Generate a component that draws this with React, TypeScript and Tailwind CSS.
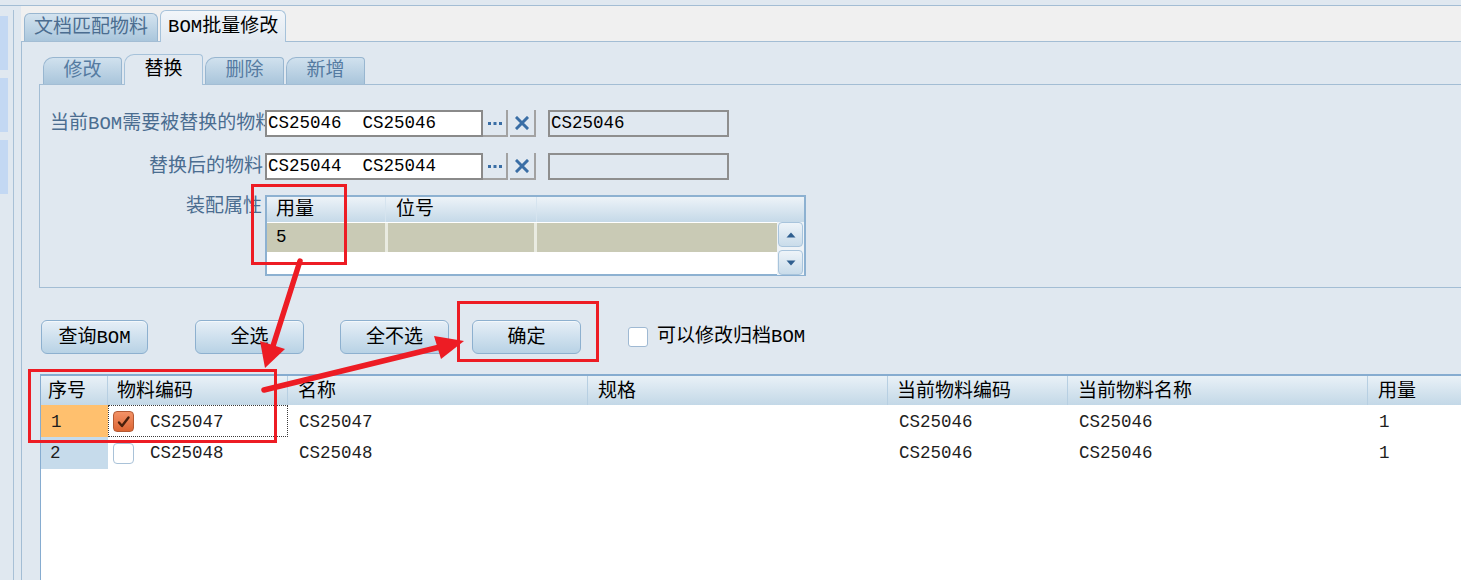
import React from "react";

const code = "text-[17.5px]";

function OuterTab({ label, active }: { label: string; active?: boolean }) {
  if (active) {
    return (
      <div className="relative z-10 mb-[-1px] h-[32px] w-[126px] rounded-t-[6px] border border-b-0 border-[#a6c2da] bg-linear-to-b from-[#f2f6fa] to-[#e0e8f0] pl-[7px] pt-[2px] flex items-center text-black whitespace-nowrap">
        {label}
      </div>
    );
  }
  return (
    <div className="h-[28px] w-[134px] rounded-t-[6px] border border-b-0 border-[#98b6d0] bg-linear-to-b from-[#d3e3ef] to-[#aac6dc] pl-[9px] pt-[2px] flex items-center text-[#4b6d90] whitespace-nowrap">
      {label}
    </div>
  );
}

function InnerTab({ label, active }: { label: string; active?: boolean }) {
  if (active) {
    return (
      <div className="relative z-10 mb-[-1px] h-[31px] w-[79px] rounded-tl-[10px] rounded-tr-[4px] border border-b-0 border-[#a6c2da] bg-[#e0e8f0] flex items-center justify-center text-black">
        {label}
      </div>
    );
  }
  return (
    <div className="h-[27px] w-[79px] rounded-tl-[10px] rounded-tr-[4px] border border-b-0 border-[#98b6d0] bg-linear-to-b from-[#d0e1ee] to-[#a9c5db] flex items-center justify-center text-[#557ba1]">
      {label}
    </div>
  );
}

function DotsBtn() {
  return (
    <div className="h-[27px] w-[25px] border-r-2 border-b-2 border-[#a2a2a2] bg-[#e0e8f0] flex items-center justify-center">
      <svg width="16" height="4" viewBox="0 0 16 4">
        <rect x="1" y="1" width="3" height="3" fill="#3a6ea5" />
        <rect x="6.5" y="1" width="3" height="3" fill="#3a6ea5" />
        <rect x="12" y="1" width="3" height="3" fill="#3a6ea5" />
      </svg>
    </div>
  );
}

function ClearBtn() {
  return (
    <div className="ml-[2px] h-[27px] w-[26px] border-r-2 border-b-2 border-[#a2a2a2] bg-[#e0e8f0] flex items-center justify-center">
      <svg width="14" height="14" viewBox="0 0 14 14">
        <path d="M2 2 L12 12 M12 2 L2 12" stroke="#3a6ea5" strokeWidth="3" strokeLinecap="square" />
      </svg>
    </div>
  );
}

function Btn({ label, w, ml }: { label: string; w: string; ml: string }) {
  return (
    <div
      className={`${w} ${ml} h-[34px] pt-[2px] rounded-[6px] border border-[#8db0cf] bg-linear-to-b from-[#e6eff7] to-[#b8d2e5] flex items-center justify-center text-black shadow-[inset_0_1px_0_#f4f8fb]`}
    >
      {label}
    </div>
  );
}

function ScrollBtn({ up }: { up?: boolean }) {
  return (
    <div className="h-[25px] w-[25px] rounded-[4px] border border-[#a8c4dc] bg-linear-to-b from-[#eef4f9] to-[#c9dcea] flex items-center justify-center">
      <svg width="10" height="6" viewBox="0 0 10 6">
        {up ? <polygon points="5,0.5 9.5,5.5 0.5,5.5" fill="#2f5f8f" /> : <polygon points="0.5,0.5 9.5,0.5 5,5.5" fill="#2f5f8f" />}
      </svg>
    </div>
  );
}

function CheckOn() {
  return (
    <div className="h-[21px] w-[21px] rounded-[4px] border border-[#b35a34] bg-linear-to-b from-[#f39266] to-[#dc6432] flex items-center justify-center">
      <svg width="15" height="15" viewBox="0 0 15 15">
        <path d="M3 8.5 L6 12 L12.5 3.5" fill="none" stroke="#4a200c" strokeWidth="2.4" strokeLinecap="round" strokeLinejoin="round" />
      </svg>
    </div>
  );
}

function CheckOff() {
  return <div className="h-[21px] w-[21px] rounded-[4px] border border-[#a9c2d8] bg-white" />;
}

export default function App() {
  return (
    <div className="relative w-[1461px] h-[580px] overflow-hidden bg-[#e0e8f0] text-[19px] leading-none text-black font-['Liberation_Mono','Noto_Sans_CJK_SC',monospace] flex flex-col">
      <div className="h-[6px] shrink-0 border-b border-[#a3bdd4]" />
      <div className="flex flex-1 min-h-0">
        {/* sidebar */}
        <div className="w-[21px] shrink-0 flex">
          <div className="w-[8px] flex flex-col gap-[8px] pt-[10px]">
            <div className="h-[54px] bg-[#c3d8f3]" />
            <div className="h-[54px] bg-[#c3d8f3]" />
            <div className="h-[54px] bg-[#c3d8f3]" />
          </div>
          <div className="w-[5px]" />
          <div className="w-[8px] mt-[4px] border-l border-[#a8c0d6]" />
        </div>
        {/* main */}
        <div className="flex-1 min-w-0 flex flex-col">
          <div className="h-[35px] shrink-0 bg-[#f0f0f0] flex items-end pl-[3px] gap-[2px]">
            <OuterTab label="文档匹配物料" />
            <OuterTab label="BOM批量修改" active />
          </div>
          <div className="flex-1 min-h-0 border-l border-t border-[#a3bdd4] pl-[17px] flex flex-col">
            {/* inner tabs */}
            <div className="mt-[12px] h-[30px] shrink-0 flex items-end gap-[2px] pl-[4px]">
              <InnerTab label="修改" />
              <InnerTab label="替换" active />
              <InnerTab label="删除" />
              <InnerTab label="新增" />
            </div>
            {/* inner panel */}
            <div className="h-[204px] shrink-0 border-l border-t border-b border-[#a3bdd4] pt-[25px]">
              {/* row 1 */}
              <div className="flex items-center h-[27px]">
                <div className="w-[225px] pl-[10px] pt-[1px] whitespace-nowrap text-[#4b6d90]">
                  <span className="relative">当前BOM需要被替换的物料</span>
                </div>
                <div className={`relative z-10 w-[218px] h-[27px] border-2 border-[#8a8a8a] bg-white pl-[1px] flex items-center whitespace-pre ${code}`}>
                  CS25046  CS25046
                </div>
                <DotsBtn />
                <ClearBtn />
                <div className={`ml-[12px] w-[181px] h-[27px] border-2 border-[#8e8e8e] bg-[#e0e8f0] pl-[1px] flex items-center ${code}`}>
                  CS25046
                </div>
              </div>
              {/* row 2 */}
              <div className="mt-[16px] flex items-center h-[27px]">
                <div className="w-[225px] pr-[2px] pt-[1px] flex justify-end whitespace-nowrap text-[#4b6d90]">替换后的物料</div>
                <div className={`w-[218px] h-[27px] border-2 border-[#8a8a8a] bg-white pl-[1px] flex items-center whitespace-pre ${code}`}>
                  CS25044  CS25044
                </div>
                <DotsBtn />
                <ClearBtn />
                <div className="ml-[12px] w-[181px] h-[27px] border-2 border-[#8e8e8e] bg-[#e0e8f0]" />
              </div>
              {/* row 3 */}
              <div className="mt-[15px] flex items-start">
                <div className="w-[225px] pr-[3px] pt-[3px] flex justify-end whitespace-nowrap text-[#4b6d90]">装配属性</div>
                <div className="w-[541px] h-[81px] border-2 border-[#8db1d1] bg-white flex flex-col">
                  <div className="h-[25px] shrink-0 flex bg-linear-to-b from-[#edf3f8] to-[#c5d9e8]">
                    <div className="w-[119px] border-r border-[#d6e4ef] pl-[9px] pt-[2px] flex items-center">用量</div>
                    <div className="w-[151px] border-r border-[#d6e4ef] pl-[10px] pt-[2px] flex items-center">位号</div>
                    <div className="flex-1" />
                  </div>
                  <div className="flex flex-1">
                    <div className="flex-1 pt-[1px]">
                      <div className="h-[29px] flex bg-[#e9ebe1]">
                        <div className={`w-[118px] bg-[#c9cab5] pl-[9px] pt-[1px] flex items-center ${code}`}>5</div>
                        <div className="w-[146px] ml-[3px] bg-[#c9cab5]" />
                        <div className="flex-1 ml-[3px] bg-[#c9cab5]" />
                      </div>
                    </div>
                    <div className="w-[27px] bg-[#eef3f7] flex flex-col items-center gap-[3px]">
                      <ScrollBtn up />
                      <ScrollBtn />
                    </div>
                  </div>
                </div>
              </div>
            </div>
            {/* button row */}
            <div className="mt-[32px] h-[34px] shrink-0 flex items-center">
              <Btn label="查询BOM" w="w-[107px]" ml="ml-[2px]" />
              <Btn label="全选" w="w-[109px]" ml="ml-[47px]" />
              <Btn label="全不选" w="w-[109px]" ml="ml-[36px]" />
              <Btn label="确定" w="w-[109px]" ml="ml-[23px]" />
              <div className="ml-[47px] h-[20px] w-[20px] rounded-[3px] border border-[#9fb9d3] bg-white" />
              <div className="ml-[9px] pt-[1px] whitespace-nowrap">可以修改归档BOM</div>
            </div>
            {/* bottom grid */}
            <div className="mt-[20px] ml-[1px] flex-1 min-h-0 border-t-2 border-l border-[#86acd0] bg-white flex flex-col">
              <div className="h-[29px] shrink-0 flex bg-linear-to-b from-[#e9f1f7] to-[#c3d8e7]">
                <div className="w-[67px] border-r border-[#b7cfe2] pl-[7px] pt-[3px] flex items-center">序号</div>
                <div className="w-[180px] border-r border-[#b7cfe2] pl-[9px] pt-[3px] flex items-center">物料编码</div>
                <div className="w-[300px] border-r border-[#b7cfe2] pl-[10px] pt-[3px] flex items-center">名称</div>
                <div className="w-[300px] border-r border-[#b7cfe2] pl-[10px] pt-[3px] flex items-center">规格</div>
                <div className="w-[180px] border-r border-[#b7cfe2] pl-[9px] pt-[3px] flex items-center">当前物料编码</div>
                <div className="w-[300px] border-r border-[#b7cfe2] pl-[10px] pt-[3px] flex items-center">当前物料名称</div>
                <div className="flex-1 pl-[10px] pt-[3px] flex items-center">用量</div>
              </div>
              {/* row 1 */}
              <div className={`h-[32px] shrink-0 flex text-[#1e1e1e] ${code}`}>
                <div className="w-[67px] bg-[#ffc06e] pl-[10px] pt-[3px] flex items-center">1</div>
                <div className="w-[180px] border border-dotted border-[#3a3a3a] pl-[4px] pt-[1px] flex items-center">
                  <CheckOn />
                  <span className="ml-[16px] pt-[2px]">CS25047</span>
                </div>
                <div className="w-[300px] pl-[11px] pt-[3px] flex items-center">CS25047</div>
                <div className="w-[300px]" />
                <div className="w-[180px] pl-[11px] pt-[3px] flex items-center">CS25046</div>
                <div className="w-[300px] pl-[11px] pt-[3px] flex items-center">CS25046</div>
                <div className="flex-1 pl-[11px] pt-[3px] flex items-center">1</div>
              </div>
              {/* row 2 */}
              <div className={`h-[32px] shrink-0 flex text-[#1e1e1e] ${code}`}>
                <div className="w-[67px] bg-[#c6dbeb] pl-[9px] pt-[2px] flex items-center">2</div>
                <div className="w-[180px] pl-[5px] pt-[1px] flex items-center">
                  <CheckOff />
                  <span className="ml-[16px] pt-[1px]">CS25048</span>
                </div>
                <div className="w-[300px] pl-[11px] pt-[2px] flex items-center">CS25048</div>
                <div className="w-[300px]" />
                <div className="w-[180px] pl-[11px] pt-[2px] flex items-center">CS25046</div>
                <div className="w-[300px] pl-[11px] pt-[2px] flex items-center">CS25046</div>
                <div className="flex-1 pl-[11px] pt-[2px] flex items-center">1</div>
              </div>
            </div>
          </div>
        </div>
      </div>

      {/* red annotations */}
      <svg className="absolute left-0 top-0 pointer-events-none" width="1461" height="580" viewBox="0 0 1461 580">
        <g fill="none" stroke="#ed1c24" strokeWidth="3">
          <rect x="252.5" y="185.5" width="93" height="78" />
          <rect x="458.5" y="302.5" width="139" height="58" />
          <rect x="29.5" y="370.5" width="246" height="71" />
        </g>
        <g stroke="#ed1c24" strokeWidth="5.5" strokeLinecap="round">
          <line x1="300" y1="261" x2="273" y2="346" />
          <line x1="264" y1="390" x2="440" y2="347" />
        </g>
        <g fill="#ed1c24">
          <polygon points="265,368 260,341 285,349" />
          <polygon points="464,341 434,336 441,359" />
        </g>
      </svg>
    </div>
  );
}
